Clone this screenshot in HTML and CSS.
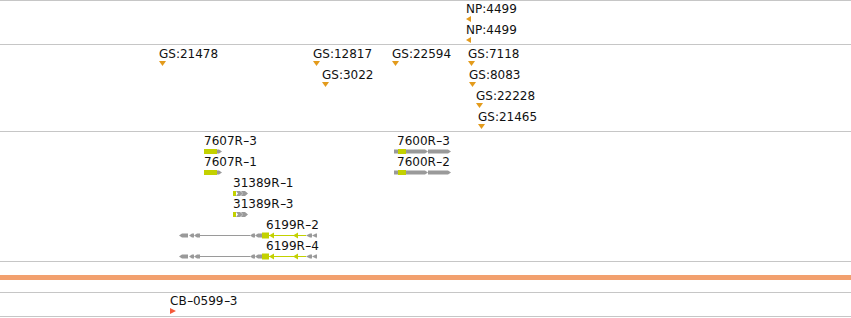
FILE: index.html
```html
<!DOCTYPE html>
<html lang="en">
<head>
    <meta charset="UTF-8">
    <title>Tracks</title>
    <link rel="stylesheet" href="styles.css">
</head>
<body>

    <div class="browser">
        <!-- NP track -->
        <div class="track first t-np">
            <div class="feat np1">
                <span class="lbl">NP:4499</span>
                <svg width="5" height="7"><polygon points="5,0 5,6 0,3" class="gold"/></svg>
            </div>
            <div class="feat np2">
                <span class="lbl">NP:4499</span>
                <svg width="5" height="7"><polygon points="5,0 5,6 0,3" class="gold"/></svg>
            </div>
        </div>

        <!-- GS track -->
        <div class="track t-gs">
            <div class="feat gs21478"><span class="lbl">GS:21478</span><svg width="7" height="6"><polygon points="0,0 7,0 3.5,5" class="gold"/></svg></div>
            <div class="feat gs12817"><span class="lbl">GS:12817</span><svg width="7" height="6"><polygon points="0,0 7,0 3.5,5" class="gold"/></svg></div>
            <div class="feat gs3022"><span class="lbl">GS:3022</span><svg width="7" height="6"><polygon points="0,0 7,0 3.5,5" class="gold"/></svg></div>
            <div class="feat gs22594"><span class="lbl">GS:22594</span><svg width="7" height="6"><polygon points="0,0 7,0 3.5,5" class="gold"/></svg></div>
            <div class="feat gs7118"><span class="lbl">GS:7118</span><svg width="7" height="6"><polygon points="0,0 7,0 3.5,5" class="gold"/></svg></div>
            <div class="feat gs8083"><span class="lbl">GS:8083</span><svg width="7" height="6"><polygon points="0,0 7,0 3.5,5" class="gold"/></svg></div>
            <div class="feat gs22228"><span class="lbl">GS:22228</span><svg width="7" height="6"><polygon points="0,0 7,0 3.5,5" class="gold"/></svg></div>
            <div class="feat gs21465"><span class="lbl">GS:21465</span><svg width="7" height="6"><polygon points="0,0 7,0 3.5,5" class="gold"/></svg></div>
        </div>

        <!-- transcripts -->
        <div class="track t-tx">
            <div class="feat r7607a">
                <span class="lbl">7607R<span class="dash">-</span>3</span>
                <svg width="20" height="7">
                    <rect x="0" y="1" width="13" height="5" class="lime"/>
                    <polygon points="13,1.5 15,1.5 18,3.5 15,5.5 13,5.5" class="grey"/>
                </svg>
            </div>
            <div class="feat r7607b">
                <span class="lbl">7607R<span class="dash">-</span>1</span>
                <svg width="20" height="7">
                    <rect x="0" y="1" width="13" height="5" class="lime"/>
                    <polygon points="13,1.5 15,1.5 18,3.5 15,5.5 13,5.5" class="grey"/>
                </svg>
            </div>
            <div class="feat r31389a">
                <span class="lbl">31389R<span class="dash">-</span>1</span>
                <svg width="16" height="7">
                    <rect x="0" y="1" width="3" height="5" class="lime"/>
                    <polygon points="3,1 7,1 10,3.5 7,6 3,6 5,3.5" class="grey"/>
                    <polygon points="8,1 12,1 15,3.5 12,6 8,6 10,3.5" class="grey"/>
                </svg>
            </div>
            <div class="feat r31389b">
                <span class="lbl">31389R<span class="dash">-</span>3</span>
                <svg width="16" height="7">
                    <rect x="0" y="1" width="3" height="5" class="lime"/>
                    <polygon points="3,1 7,1 10,3.5 7,6 3,6 5,3.5" class="grey"/>
                    <polygon points="8,1 12,1 15,3.5 12,6 8,6 10,3.5" class="grey"/>
                </svg>
            </div>
            <div class="feat r6199a">
                <span class="lbl">6199R<span class="dash">-</span>2</span>
                <svg width="140" height="7">
                    <polygon points="0,3.5 3,1.5 9,1.5 9,5.5 3,5.5" class="grey"/>
                    <polygon points="10,3.5 13,1.5 15,1.5 15,5.5 13,5.5" class="grey"/>
                    <polygon points="15,3.5 18,1.5 21,1.5 21,5.5 18,5.5" class="grey"/>
                    <rect x="21" y="3" width="50" height="1" class="grey"/>
                    <polygon points="71,3.5 74,1.5 76,1.5 76,5.5 74,5.5" class="grey"/>
                    <polygon points="76,3.5 79,1.5 83,1.5 83,5.5 79,5.5" class="grey"/>
                    <rect x="83" y="0.5" width="7" height="6" class="lime"/>
                    <polygon points="90,3.5 95,0.5 95,6.5" class="lime"/>
                    <rect x="90" y="3" width="37" height="1" class="lime"/>
                    <polygon points="114,3.5 119,0.5 119,6.5" class="lime"/>
                    <polygon points="127,3.5 131,1.5 133,1.5 133,5.5 131,5.5" class="grey"/>
                    <polygon points="133,3.5 137,1.5 138,1.5 138,5.5 137,5.5" class="grey"/>
                </svg>
            </div>
            <div class="feat r6199b">
                <span class="lbl">6199R<span class="dash">-</span>4</span>
                <svg width="140" height="7">
                    <polygon points="0,3.5 3,1.5 9,1.5 9,5.5 3,5.5" class="grey"/>
                    <polygon points="10,3.5 13,1.5 15,1.5 15,5.5 13,5.5" class="grey"/>
                    <polygon points="15,3.5 18,1.5 21,1.5 21,5.5 18,5.5" class="grey"/>
                    <rect x="21" y="3" width="50" height="1" class="grey"/>
                    <polygon points="71,3.5 74,1.5 76,1.5 76,5.5 74,5.5" class="grey"/>
                    <polygon points="76,3.5 79,1.5 83,1.5 83,5.5 79,5.5" class="grey"/>
                    <rect x="83" y="0.5" width="7" height="6" class="lime"/>
                    <polygon points="90,3.5 95,0.5 95,6.5" class="lime"/>
                    <rect x="90" y="3" width="37" height="1" class="lime"/>
                    <polygon points="114,3.5 119,0.5 119,6.5" class="lime"/>
                    <polygon points="127,3.5 131,1.5 133,1.5 133,5.5 131,5.5" class="grey"/>
                    <polygon points="133,3.5 137,1.5 138,1.5 138,5.5 137,5.5" class="grey"/>
                </svg>
            </div>
            <div class="feat r7600a">
                <span class="lbl">7600R<span class="dash">-</span>3</span>
                <svg width="60" height="7">
                    <rect x="0" y="1.5" width="4" height="4" class="grey"/>
                    <rect x="4" y="1" width="8" height="5" class="lime"/>
                    <polygon points="12,1.5 31,1.5 34,3.5 31,5.5 12,5.5" class="grey"/>
                    <polygon points="34,1.5 54,1.5 57,3.5 54,5.5 34,5.5" class="grey"/>
                </svg>
            </div>
            <div class="feat r7600b">
                <span class="lbl">7600R<span class="dash">-</span>2</span>
                <svg width="60" height="7">
                    <rect x="0" y="1.5" width="4" height="4" class="grey"/>
                    <rect x="4" y="1" width="8" height="5" class="lime"/>
                    <polygon points="12,1.5 31,1.5 34,3.5 31,5.5 12,5.5" class="grey"/>
                    <polygon points="34,1.5 54,1.5 57,3.5 54,5.5 34,5.5" class="grey"/>
                </svg>
            </div>
        </div>

        <!-- ruler -->
        <div class="track t-ruler">
            <div class="band"></div>
        </div>

        <!-- CB track -->
        <div class="track t-cb">
            <div class="feat cb0599">
                <span class="lbl">CB<span class="dash">-</span>0599<span class="dash">-</span>3</span>
                <svg width="6" height="7"><polygon points="0,0 0,6 6,3" class="red"/></svg>
            </div>
        </div>
    </div>

</body>
</html>
```

FILE: styles.css
```css
body {
    margin: 0;
    font-family: "DejaVu Sans", sans-serif;
    font-size: 12px;
    color: #111;
    background-color: #fff;
}
.browser {
    width: 851px;
}
.track {
    position: relative;
    border-bottom: 1px solid #c6c6c6;
}
.track.first {
    border-top: 1px solid #c6c6c6;
}
.t-np { height: 43px; }
.t-gs { height: 86px; }
.t-tx { height: 129px; }
.t-ruler {
    height: 31px;
    padding-top: 13px;
    box-sizing: border-box;
}
.t-cb { height: 23px; }

.band {
    height: 5px;
    background-color: #f2a06e;
}

.feat {
    position: absolute;
    margin-top: 1px;
}
.feat .lbl {
    display: block;
    line-height: 13px;
    white-space: nowrap;
}
.feat .dash {
    display: inline-block;
    transform: scaleX(1.5);
    margin: 0 1px;
}
.feat svg {
    display: block;
}
.gold { fill: #e39b1c; }
.lime { fill: #c3d100; }
.grey { fill: #9a9a9a; }
.red { fill: #f55a3a; }

/* NP */
.np1 { left: 466px; top: 1px; }
.np2 { left: 466px; top: 22px; }

/* GS */
.gs21478 { left: 159px; top: 2px; }
.gs12817 { left: 313px; top: 2px; }
.gs3022 { left: 322px; top: 23px; }
.gs22594 { left: 392px; top: 2px; }
.gs7118 { left: 468px; top: 2px; }
.gs8083 { left: 469px; top: 23px; }
.gs22228 { left: 476px; top: 44px; }
.gs21465 { left: 478px; top: 65px; }

/* transcripts */
.r7607a { left: 204px; top: 2px; }
.r7607b { left: 204px; top: 23px; }
.r31389a { left: 233px; top: 44px; }
.r31389b { left: 233px; top: 65px; }
.r6199a { left: 179px; top: 86px; }
.r6199b { left: 179px; top: 107px; }
.r6199a .lbl,
.r6199b .lbl { margin-left: 87px; }
.r7600a { left: 394px; top: 2px; }
.r7600b { left: 394px; top: 23px; }
.r7600a .lbl,
.r7600b .lbl { margin-left: 3px; }

/* CB */
.cb0599 { left: 170px; top: 1px; }
```
